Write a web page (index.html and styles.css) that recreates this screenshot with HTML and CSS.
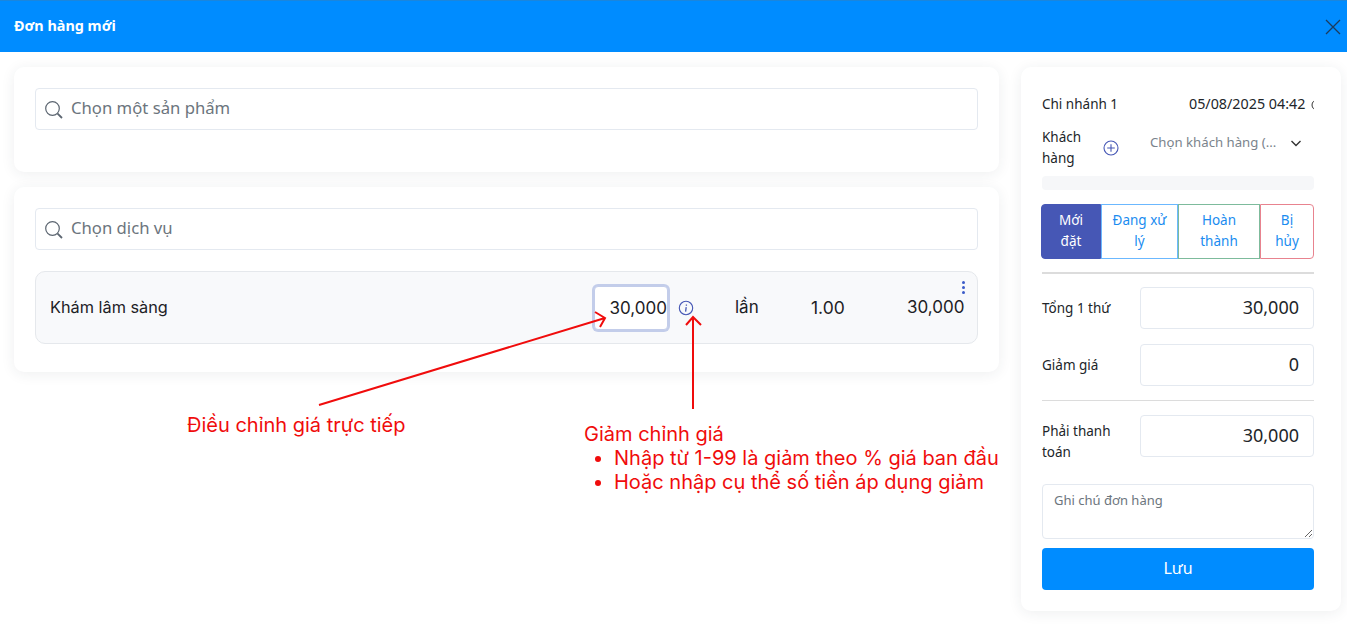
FILE: index.html

```html
<!DOCTYPE html>
<html lang="vi">
<head>
  <meta charset="UTF-8">
  <meta name="viewport" content="width=device-width, initial-scale=1.0">
  <title>Đơn hàng mới</title>
  <link rel="stylesheet" href="styles.css">
</head>
<body>
  <header class="top-bar">
    <h1 class="top-title">Đơn hàng mới</h1>
    <button class="close-button" aria-label="Đóng">
      <svg width="16" height="16" viewBox="0 0 16 16"><path d="M1 1 L15 15 M15 1 L1 15" stroke="#1c3b5c" stroke-width="1.3" fill="none"/></svg>
    </button>
  </header>

  <main class="order-layout">
    <section class="left-col">
      <div class="card card-product">
        <label class="search-box">
          <svg width="20" height="20" viewBox="0 0 20 20"><circle cx="8.5" cy="8.5" r="6.8" stroke="#5b6570" stroke-width="1.2" fill="none"/><path d="M13.6 13.6 L18 18" stroke="#5b6570" stroke-width="1.8" fill="none"/></svg>
          <input type="text" placeholder="Chọn một sản phẩm">
        </label>
      </div>

      <div class="card card-service">
        <label class="search-box">
          <svg width="20" height="20" viewBox="0 0 20 20"><circle cx="8.5" cy="8.5" r="6.8" stroke="#5b6570" stroke-width="1.2" fill="none"/><path d="M13.6 13.6 L18 18" stroke="#5b6570" stroke-width="1.8" fill="none"/></svg>
          <input type="text" placeholder="Chọn dịch vụ">
        </label>

        <div class="service-row">
          <span class="service-name">Khám lâm sàng</span>
          <input class="price-input" type="text" value="30,000">
          <svg class="info-icon" width="16" height="16" viewBox="0 0 16 16"><circle cx="8" cy="8" r="6.7" stroke="#4657b5" stroke-width="1.1" fill="none"/><path d="M8.4 4.4 v1.3 M8.2 7.2 L7.6 11.6" stroke="#4657b5" stroke-width="1.3" fill="none"/></svg>
          <span class="service-unit">lần</span>
          <span class="service-qty">1.00</span>
          <span class="service-total">30,000</span>
          <span class="row-menu"><i></i><i></i><i></i></span>
        </div>
      </div>
    </section>

    <aside class="card side-card">
      <div class="side-head">
        <span>Chi nhánh 1</span>
        <span class="side-date">05/08/2025 04:42 <svg width="12" height="12" viewBox="0 0 12 12"><circle cx="6" cy="6" r="5" stroke="#333" stroke-width="1" fill="none"/></svg></span>
      </div>

      <div class="customer-row">
        <span class="customer-label">Khách hàng</span>
        <svg class="plus-icon" width="16" height="16" viewBox="0 0 16 16"><circle cx="8" cy="8" r="7" stroke="#4657b5" stroke-width="1.1" fill="none"/><path d="M8 4.2 v7.6 M4.2 8 h7.6" stroke="#4657b5" stroke-width="1.1" fill="none"/></svg>
        <span class="customer-select">Chọn khách hàng (...</span>
        <svg class="chevron" width="12" height="12" viewBox="0 0 12 12"><path d="M1.5 4 L6 8.5 L10.5 4" stroke="#333" stroke-width="1.4" fill="none"/></svg>
      </div>
      <div class="customer-bar"></div>

      <div class="status-group">
        <button class="status status-new">Mới đặt</button>
        <button class="status status-doing">Đang xử lý</button>
        <button class="status status-done">Hoàn thành</button>
        <button class="status status-cancel">Bị hủy</button>
      </div>

      <hr class="line line-thick">

      <div class="money-row">
        <span class="money-label">Tổng 1 thứ</span>
        <input class="money-input" type="text" value="30,000">
      </div>
      <div class="money-row money-row-next">
        <span class="money-label">Giảm giá</span>
        <input class="money-input" type="text" value="0">
      </div>

      <hr class="line">

      <div class="money-row money-row-top">
        <span class="money-label">Phải thanh toán</span>
        <input class="money-input" type="text" value="30,000">
      </div>

      <textarea class="note" placeholder="Ghi chú đơn hàng"></textarea>
      <button class="save-button">Lưu</button>
    </aside>
  </main>

  <!-- red notes drawn on top of the screenshot -->
  <svg class="arrows" width="1347" height="637" viewBox="0 0 1347 637">
    <path d="M319 405 L605 318 M595 312 L605 318 L600 327" stroke="#f00c0c" stroke-width="2" fill="none"/>
    <path d="M693 409 L693 317 M686 325 L693 317 L701 325" stroke="#f00c0c" stroke-width="2" fill="none"/>
  </svg>
  <div class="note-direct">Điều chỉnh giá trực tiếp</div>
  <div class="note-discount">
    Giảm chỉnh giá
    <ul>
      <li>Nhập từ 1-99 là giảm theo % giá ban đầu</li>
      <li>Hoặc nhập cụ thể số tiền áp dụng giảm</li>
    </ul>
  </div>
</body>
</html>
```

FILE: styles.css

```css
* {
  margin: 0;
  padding: 0;
  box-sizing: border-box;
}
html, body {
  height: 100%;
  overflow: hidden;
}
body {
  position: relative;
  background-color: #fff;
  color: #212529;
  font-family: "Noto Sans", Arial, sans-serif;
  font-size: 13.5px;
  line-height: 21px;
}
input, textarea, button {
  font-family: inherit;
  color: inherit;
}
.top-bar {
  height: 52px;
  display: flex;
  justify-content: space-between;
  align-items: center;
  padding: 0 6px 0 14px;
  background-color: #008cff;
  border-top: 1px solid #1b86dd;
}
.top-title {
  font-size: 14.4px;
  font-weight: 700;
  color: #fff;
  margin-bottom: 3px;
}
.close-button {
  display: flex;
  border: none;
  background: none;
}
.order-layout {
  display: grid;
  grid-template-columns: 985px 320px;
  gap: 22px;
  padding: 15px 0 0 14px;
}
.card {
  background-color: #fff;
  border-radius: 10px;
  box-shadow: 0 2px 14px rgba(40, 50, 70, 0.08);
}
.left-col {
  display: flex;
  flex-direction: column;
  gap: 15px;
}
.card-product {
  height: 105px;
  padding: 21px;
}
.card-service {
  height: 185px;
  padding: 21px;
}
.search-box {
  height: 42px;
  display: flex;
  align-items: center;
  gap: 7px;
  padding: 0 8px;
  border: 1px solid #e4e9f0;
  border-radius: 4px;
}
.search-box svg {
  margin-top: 2px;
  flex: none;
}
.search-box input {
  flex: 1;
  border: none;
  outline: none;
  font-size: 16.7px;
  margin-bottom: 4px;
}
.search-box input::placeholder,
.note::placeholder {
  color: #6c757d;
  opacity: 1;
}
.service-row {
  position: relative;
  height: 73px;
  margin-top: 21px;
  display: flex;
  align-items: center;
  padding: 0 13px 0 14px;
  background-color: #f8f9fb;
  border: 1px solid #e5e8ec;
  border-radius: 10px;
  font-family: Inter, Arial, sans-serif;
  font-size: 16.3px;
  color: #1d2125;
}
.service-name {
  flex: 1;
}
.price-input {
  width: 74px;
  height: 44px;
  padding-right: 0;
  text-align: right;
  font-size: 17px;
  background-color: #fff;
  border: 1px solid #c3cdea;
  border-radius: 4px;
  box-shadow: 0 0 0 2px #c3cdea;
  outline: none;
  font-family: inherit;
}
.info-icon {
  margin-left: 10px;
}
.service-unit {
  margin-left: 41px;
  width: 24px;
  font-size: 17px;
}
.service-qty {
  margin-left: 52px;
  width: 35px;
  font-size: 17.5px;
}
.service-total {
  margin-left: 61px;
  width: 57px;
  text-align: right;
  font-size: 17px;
}
.row-menu {
  position: absolute;
  top: 9px;
  right: 12px;
  display: flex;
  flex-direction: column;
  gap: 2px;
}
.row-menu i {
  width: 3px;
  height: 3px;
  border-radius: 50%;
  background-color: #3b5bc9;
}
.side-card {
  height: 544px;
  padding: 27px 27px 21px 21px;
  display: flex;
  flex-direction: column;
}
.side-card > * {
  flex: none;
}
.side-head {
  display: flex;
  justify-content: space-between;
  height: 21px;
  overflow: hidden;
  white-space: nowrap;
}
.side-date {
  width: 125px;
  overflow: hidden;
  font-size: 14.3px;
  line-height: 20px;
}
.side-date svg {
  vertical-align: -2px;
  margin-left: 2px;
}
.customer-row {
  display: flex;
  align-items: flex-start;
  margin-top: 12px;
  height: 42px;
}
.customer-label {
  width: 44px;
}
.plus-icon {
  margin: 13px 0 0 17px;
  flex: none;
}
.customer-select {
  margin: 5px 0 0 31px;
  width: 130px;
  color: #7a838c;
  white-space: nowrap;
  font-size: 13.2px;
}
.chevron {
  margin: 10px 0 0 10px;
}
.customer-bar {
  height: 14px;
  margin-top: 7px;
  background-color: #f6f7f9;
  border-radius: 4px;
}
.status-group {
  display: flex;
  height: 55px;
  margin: 14px 0 0 -1px;
}
.status {
  padding: 2px 8px 4px;
  font-size: 13.5px;
  line-height: 21px;
  color: #1a8cf0;
  background-color: #fff;
  border: 1px solid;
}
.status-new {
  width: 60px;
  color: #fff;
  background-color: #4657b5;
  border-color: #4657b5;
  border-radius: 4px 0 0 4px;
}
.status-doing {
  width: 77px;
  border-color: #6bb8ff;
  padding: 2px 4px 4px;
}
.status-done {
  width: 82px;
  border-color: #7dbb9c;
}
.status-cancel {
  width: 54px;
  border-color: #e8838f;
  border-radius: 0 4px 4px 0;
}
.line {
  border: none;
  border-top: 1px solid #dcdcdc;
  margin: 14px 0;
}
.line-thick {
  border-top-width: 2px;
  margin: 13px 0;
}
.money-row {
  display: flex;
  align-items: center;
  gap: 14px;
}
.money-row-next {
  margin-top: 15px;
}
.money-row-top {
  align-items: flex-start;
}
.money-row-top .money-label {
  margin-top: 6px;
}
.money-label {
  width: 84px;
  flex: none;
}
.money-input {
  width: 174px;
  height: 42px;
  padding: 0 14px 2px;
  text-align: right;
  font-size: 18px;
  background-color: #fff;
  border: 1px solid #e4e9f0;
  border-radius: 4px;
  outline: none;
}
.note {
  display: block;
  width: 100%;
  height: 55px;
  margin-top: 21px;
  padding: 6px 11px;
  font-size: 13px;
  border: 1px solid #e4e9f0;
  border-radius: 4px;
  outline: none;
}
.save-button {
  height: 42px;
  margin-top: 9px;
  padding-bottom: 2px;
  font-size: 16px;
  color: #fff;
  background-color: #008cff;
  border: none;
  border-radius: 4px;
}
.arrows {
  position: absolute;
  top: 0;
  left: 0;
  pointer-events: none;
}
.note-direct,
.note-discount {
  position: absolute;
  font-family: Inter, Arial, sans-serif;
  font-size: 20px;
  line-height: 24px;
  color: #f00c0c;
  white-space: nowrap;
}
.note-direct {
  top: 413px;
  left: 187px;
}
.note-discount {
  top: 422px;
  left: 584px;
}
.note-discount ul {
  padding-left: 30px;
}
```
